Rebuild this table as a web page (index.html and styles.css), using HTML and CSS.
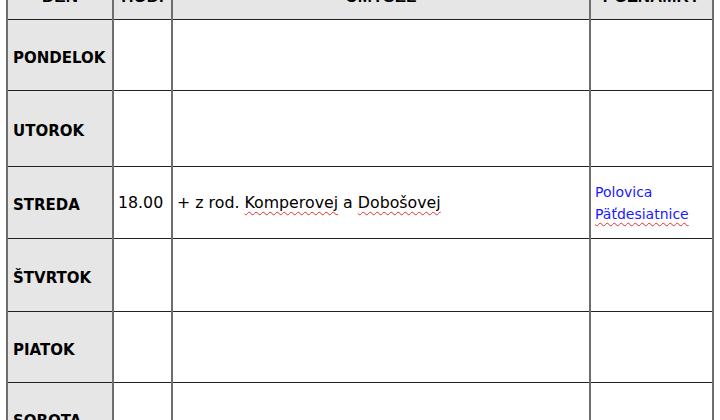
FILE: index.html
```html
<!DOCTYPE html>
<html lang="sk">
<head>
<meta charset="utf-8">
<title>Týždeň</title>
<link rel="stylesheet" href="styles.css">
</head>
<body>
<div class="page">
<table class="plan">
  <colgroup>
    <col class="c-day">
    <col class="c-hour">
    <col class="c-intent">
    <col class="c-note">
  </colgroup>
  <thead>
    <tr class="head">
      <th>DEN</th>
      <th>HOD.</th>
      <th>UMYSEL</th>
      <th>POZNÁMKY</th>
    </tr>
  </thead>
  <tbody>
    <tr class="r1"><td class="day">PONDELOK</td><td></td><td></td><td></td></tr>
    <tr class="r2"><td class="day">UTOROK</td><td></td><td></td><td></td></tr>
    <tr class="r3">
      <td class="day">STREDA</td>
      <td class="txt">18.00</td>
      <td class="txt">+ z rod. <span class="sp">Komperovej</span> a <span class="sp">Dobošovej</span></td>
      <td class="note">Polovica<br><span class="sp">Päťdesiatnice</span></td>
    </tr>
    <tr class="r4"><td class="day">ŠTVRTOK</td><td></td><td></td><td></td></tr>
    <tr class="r5"><td class="day">PIATOK</td><td></td><td></td><td></td></tr>
    <tr class="r6"><td class="day">SOBOTA</td><td></td><td></td><td></td></tr>
  </tbody>
</table>
</div>
</body>
</html>
```
FILE: styles.css
```css
html, body {
  margin: 0;
  padding: 0;
  background: #ffffff;
}
.page {
  width: 720px;
  height: 420px;
  overflow: hidden;
  padding-left: 6px;
  box-sizing: border-box;
}
.plan {
  margin-top: -26px;
  border-collapse: collapse;
  table-layout: fixed;
  width: 708px;
  font-family: "DejaVu Sans", sans-serif;
  color: #000;
}
.c-day { width: 106px; }
.c-hour { width: 59px; }
.c-intent { width: 418px; }
.c-note { width: 123px; }
.plan th, .plan td {
  border-top: 1px solid #222;
  border-bottom: 1px solid #222;
  border-left: 2px solid #6e6e6e;
  border-right: 2px solid #6e6e6e;
  padding: 0 4px;
  vertical-align: middle;
  text-align: left;
}
.plan .head th {
  height: 44px;
  background: #e6e6e6;
  font-family: "Liberation Sans", Arial, sans-serif;
  font-weight: bold;
  font-size: 17px;
  text-align: center;
  padding: 0;
}
.r1 td { height: 70px; }
.r2 td { height: 75px; }
.r3 td { height: 70px; }
.r4 td { height: 72px; }
.r5 td { height: 70px; }
.r6 td { height: 70px; }
.plan td.day {
  background: #e6e6e6;
  font-weight: bold;
  font-size: 15px;
  padding: 5px 4px 0 5px;
  height: auto;
}
.txt {
  font-size: 15.8px;
}
.plan td.note {
  color: #1a1aff;
  font-size: 14px;
  line-height: 22px;
  padding-top: 1px;
}
.sp {
  text-decoration: underline wavy #e03030;
  text-decoration-thickness: 1px;
  text-underline-offset: 3px;
}
```
